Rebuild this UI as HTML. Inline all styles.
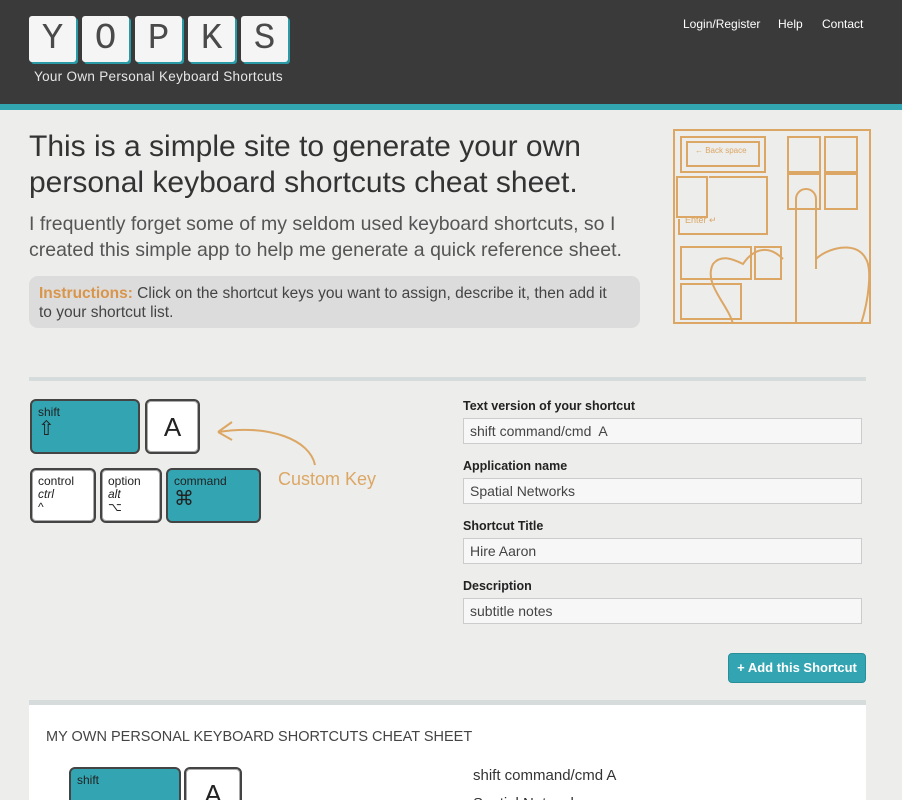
<!DOCTYPE html>
<html><head><meta charset="utf-8"><style>
*{box-sizing:border-box;margin:0;padding:0}
html,body{width:902px;height:800px;overflow:hidden}
body{background:#ededeb;font-family:"Liberation Sans",sans-serif;color:#333;position:relative}
.hdr{position:absolute;left:0;top:0;width:902px;height:110px;background:#3a3a3a;border-bottom:6px solid #31a6b1}
.tile{position:absolute;top:16px;width:47px;height:46px;background:#f5f5f5;border-radius:3px;box-shadow:2px 2px 0 #2a9aa6;font-family:"Liberation Mono",monospace;font-size:36px;line-height:46px;text-align:center;color:#4a4a4a}
.sub{position:absolute;left:34px;top:69px;color:#e6e6e6;font-size:13.5px;letter-spacing:.3px}
.nav{position:absolute;top:17px;color:#fff;font-size:12px}
h1{position:absolute;left:29px;top:129px;font-size:30px;font-weight:normal;line-height:36px;color:#333}
.p{position:absolute;left:29px;top:211px;font-size:19.5px;line-height:26px;color:#555}
.ins{position:absolute;left:29px;top:276px;width:611px;height:52px;background:#dcdcdc;border-radius:9px;padding:8px 10px;font-size:15.5px;line-height:19px;color:#444}
.ins b{color:#d9954a}
.div{position:absolute;left:29px;top:377px;width:837px;height:4px;background:#d6dbdb}
.key{position:absolute;border:2px solid #444;border-radius:6px;font-size:12px;color:#222;padding:5px 6px;line-height:13px}
.t{background:#33a5b2}
.w{background:#fff;box-shadow:inset 0 0 0 1px #aaa}
.lbl{position:absolute;left:463px;font-size:12.5px;font-weight:bold;color:#222}
.inp{position:absolute;left:463px;width:399px;height:26px;border:1px solid #ccc;background:#f7f7f7;font-size:14px;padding:4px 6px;color:#444}
.btn{position:absolute;left:728px;top:653px;width:138px;height:30px;background:#33a5b2;border:1px solid #2a8e99;border-radius:4px;color:#fff;font-weight:bold;font-size:13px;text-align:center;line-height:28px}
.panel{position:absolute;left:29px;top:700px;width:837px;height:100px;background:#fff;border-top:5px solid #d6dbdb;overflow:hidden}
</style></head><body>
<div class="hdr">
<div class="tile" style="left:29px">Y</div><div class="tile" style="left:82px">O</div><div class="tile" style="left:135px">P</div><div class="tile" style="left:188px">K</div><div class="tile" style="left:241px">S</div>
<div class="sub">Your Own Personal Keyboard Shortcuts</div>
<div class="nav" style="left:683px">Login/Register</div><div class="nav" style="left:778px">Help</div><div class="nav" style="left:822px">Contact</div>
</div>
<h1>This is a simple site to generate your own<br>personal keyboard shortcuts cheat sheet.</h1>
<div class="p">I frequently forget some of my seldom used keyboard shortcuts, so I<br>created this simple app to help me generate a quick reference sheet.</div>
<div class="ins"><b>Instructions:</b> Click on the shortcut keys you want to assign, describe it, then add it<br>to your shortcut list.</div>
<svg style="position:absolute;left:673px;top:129px" width="198" height="195" viewBox="0 0 198 195" fill="none" stroke="#dca765" stroke-width="2">
<rect x="1" y="1" width="196" height="193"/>
<rect x="8" y="8" width="84" height="35"/><rect x="14" y="13" width="72" height="24"/>
<rect x="115" y="8" width="32" height="35"/><rect x="152" y="8" width="32" height="35"/>
<rect x="115" y="45" width="32" height="35"/><rect x="152" y="45" width="32" height="35"/>
<rect x="4" y="48" width="30" height="40"/><path d="M36 48H94V105H6V90"/><rect x="8" y="118" width="70" height="32"/><rect x="82" y="118" width="26" height="32"/>
<rect x="8" y="155" width="60" height="35"/>
<path d="M123 195V70a10 10 0 0 1 20 0v70M143 130c10-10 40-20 50 0 6 10 3 40-5 65M60 195c-5-20-30-40-20-60 8-10 20-5 30 0 10-15 25-20 40-5"/>
<text x="22" y="24" font-size="8" fill="#dca765" stroke="none">← Back space</text>
<text x="12" y="94" font-size="9" fill="#dca765" stroke="none">Enter ↵</text>
</svg>
<div class="div"></div>
<div class="key t" style="left:30px;top:399px;width:110px;height:55px">shift<div style="font-size:20px;margin-top:4px">⇧</div></div>
<div class="key w" style="left:145px;top:399px;width:55px;height:55px;font-size:26px;text-align:center;line-height:42px">A</div>
<div class="key w" style="left:30px;top:468px;width:66px;height:55px">control<br><i>ctrl</i><br>^</div>
<div class="key w" style="left:100px;top:468px;width:62px;height:55px">option<br><i>alt</i><br>⌥</div>
<div class="key t" style="left:166px;top:468px;width:95px;height:55px">command<div style="font-size:20px;margin-top:5px">⌘</div></div>
<svg style="position:absolute;left:210px;top:410px" width="200" height="90" fill="none" stroke="#dca765" stroke-width="2"><path d="M8 22C60 14 100 30 105 55M8 22l14-10M8 22l14 8"/><text x="68" y="75" font-size="18" fill="#dca765" stroke="none" font-family="Liberation Sans">Custom Key</text></svg>
<div class="lbl" style="top:399px">Text version of your shortcut</div><div class="inp" style="top:418px">shift command/cmd&nbsp; A</div>
<div class="lbl" style="top:459px">Application name</div><div class="inp" style="top:478px">Spatial Networks</div>
<div class="lbl" style="top:519px">Shortcut Title</div><div class="inp" style="top:538px">Hire Aaron</div>
<div class="lbl" style="top:579px">Description</div><div class="inp" style="top:598px">subtitle notes</div>
<div class="btn">+ Add this Shortcut</div>
<div class="panel">
<div style="position:absolute;left:17px;top:24px;font-size:14.5px;color:#444">MY OWN PERSONAL KEYBOARD SHORTCUTS CHEAT SHEET</div>
<div class="key t" style="left:40px;top:62px;width:112px;height:50px">shift</div>
<div class="key w" style="left:155px;top:62px;width:58px;height:50px;font-size:26px;text-align:center;line-height:40px">A</div>
<div style="position:absolute;left:444px;top:62px;font-size:15px">shift command/cmd A</div>
<div style="position:absolute;left:444px;top:90px;font-size:15px">Spatial Networks</div>
</div>
</body></html>
